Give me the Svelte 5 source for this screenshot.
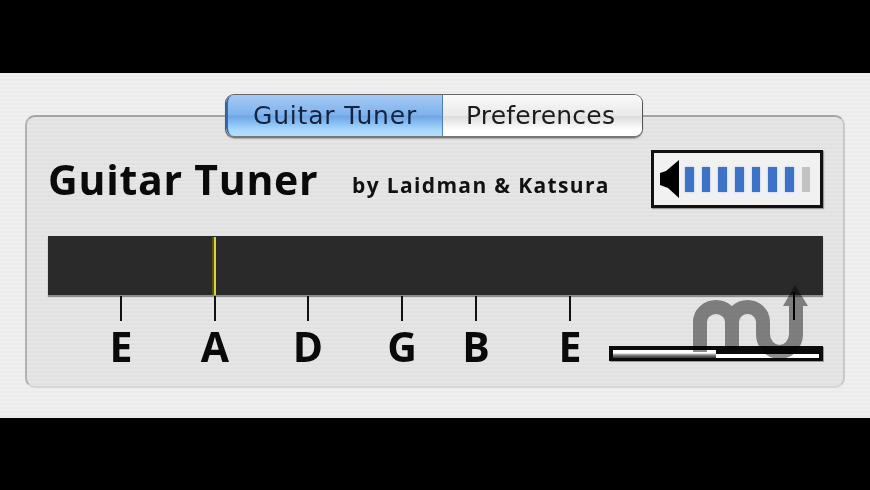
<script>
  const notes = [
    { n: 'E', x: 72 },
    { n: 'A', x: 166 },
    { n: 'D', x: 259 },
    { n: 'G', x: 353 },
    { n: 'B', x: 427 },
    { n: 'E', x: 521 }
  ];
  const levels = [1, 1, 1, 1, 1, 1, 1, 0];
</script>

<div class="window">
  <section class="panel">
    <div class="tabs">
      <div class="tab active">Guitar Tuner</div>
      <div class="tab">Preferences</div>
    </div>

    <header class="head">
      <h1>Guitar Tuner</h1>
      <p>by Laidman &amp; Katsura</p>
      <div class="meter">
        <svg class="speaker" width="20" height="38" viewBox="0 0 20 38">
          <polygon points="0,13 6,11 19,0 19,38 8,28 0,25" fill="#000" />
        </svg>
        {#each levels as on}
          <span class="seg" class:on></span>
        {/each}
      </div>
    </header>

    <div class="bar"><span class="needle"></span></div>

    <div class="scale">
      {#each notes as note}
        <div class="note" style="left:{note.x}px">
          <span class="tick"></span>
          <span class="letter">{note.n}</span>
        </div>
      {/each}
      <div class="progress"><span class="fill"></span></div>
    </div>
  </section>

  <svg class="logo" width="870" height="490" viewBox="0 0 870 490">
    <g class="mark">
      <path d="M700 352V322a16 15 0 0 1 32 0V350M732 322a15.500 15 0 0 1 31 0V334a16.500 18 0 0 0 33 0V303" fill="none" stroke="#8c8c8c" stroke-width="14" />
      <polygon points="783,306 808,306 795,285" fill="#8c8c8c" />
    </g>
    <path d="M794 292V320" stroke="#000" stroke-width="2" />
  </svg>
</div>

<style>
  :global(body) {
    margin: 0;
    background: #000;
  }
  .window {
    box-sizing: border-box;
    margin-top: 73px;
    width: 870px;
    height: 345px;
    padding: 42px 25px 30px 25px;
    position: relative;
    overflow: hidden;
    background: repeating-linear-gradient(180deg, #f0f0f0 0 2px, #ebebeb 2px 4px);
    font-family: "DejaVu Sans", sans-serif;
    filter: blur(0.45px);
  }
  .panel {
    box-sizing: border-box;
    position: relative;
    height: 273px;
    padding: 34px 20px 0 21px;
    border: 1px solid #aaa;
    border-top: 2px solid #a4a4a4;
    border-left: 2px solid #b2b2b2;
    border-right: 2px solid #c8c8c8;
    border-bottom: 2px solid #d6d6d6;
    border-radius: 10px;
    background: repeating-linear-gradient(180deg, #e6e6e6 0 2px, #e1e1e1 2px 4px);
  }
  .tabs {
    position: absolute;
    top: -23px;
    left: 198px;
    display: flex;
    width: 418px;
    height: 44px;
    box-sizing: border-box;
    border: 1px solid #555;
    border-top-color: #666;
    border-bottom: 2px solid #777;
    border-radius: 9px;
    overflow: hidden;
    box-shadow: 0 1px 1px rgba(0, 0, 0, 0.25);
  }
  .tab {
    flex: 1;
    display: flex;
    align-items: center;
    justify-content: center;
    padding-right: 4px;
    font-size: 25px;
    letter-spacing: 0.2px;
    color: #1c1c1c;
    background: linear-gradient(180deg, #fafafa 0, #e9e9e9 50%, #dcdcdc 52%, #fff 85%);
  }
  .tab.active {
    flex: 0 0 214px;
    padding-right: 0;
    letter-spacing: 0.8px;
    color: #14233f;
    background: linear-gradient(180deg, #a4c9f5 0, #7fb3ec 48%, #6ea5e6 52%, #a6d8fd 85%, #b4e0ff 100%);
    border-right: 1px solid #4d7fbd;
    border-left: 2px solid #3a67a8;
    border-radius: 8px 0 0 8px;
  }
  .head {
    display: flex;
    align-items: flex-start;
    height: 85px;
  }
  h1 {
    margin: 5px 0 0;
    font-family: "Open Sans", sans-serif;
    font-size: 41px;
    line-height: 46px;
    font-weight: 700;
    color: #0a0a0a;
    letter-spacing: 0.75px;
    width: 304px;
    white-space: nowrap;
  }
  .head p {
    margin: 20px 0 0;
    font-family: "Open Sans", sans-serif;
    font-size: 21px;
    line-height: 28px;
    font-weight: 700;
    letter-spacing: 1.35px;
    color: #111;
    white-space: nowrap;
    flex: 1;
  }
  .meter {
    box-sizing: border-box;
    display: flex;
    align-items: center;
    gap: 8.17px;
    flex: none;
    width: 172px;
    height: 58px;
    margin-top: -1px;
    padding-left: 6px;
    background: #f1f1f1;
    border: 3px solid #111;
    box-shadow: 1px 1px 1px #999;
  }
  .speaker {
    margin-right: -3px;
  }
  .seg {
    width: 8.5px;
    height: 25px;
    background: #c2c2c2;
  }
  .seg.on {
    background: #3d72c6;
    box-shadow: 0 0 2px #9cc3ee;
  }
  .bar {
    position: relative;
    height: 59px;
    background: #2a2a2a;
    box-shadow: 0 2px 1px #8d8d8d;
  }
  .needle {
    position: absolute;
    left: 166px;
    top: 1px;
    bottom: 0;
    width: 2px;
    background: #dcd23e;
    box-shadow: -2px 0 0 #55521c;
  }
  .scale {
    position: relative;
    height: 70px;
  }
  .note {
    position: absolute;
    top: 0;
    width: 2px;
    display: flex;
    flex-direction: column;
    align-items: center;
  }
  .tick {
    flex: none;
    width: 2px;
    height: 25px;
    margin-top: 1px;
    background: #111;
  }
  .letter {
    margin-top: 2px;
    font-family: "Open Sans", sans-serif;
    font-size: 41px;
    line-height: 46px;
    font-weight: 700;
    color: #0a0a0a;
  }
  .progress {
    box-sizing: border-box;
    position: absolute;
    top: 51px;
    right: 0;
    width: 214px;
    height: 15px;
    border: 4px solid #0a0a0a;
    border-bottom-width: 3px;
    background: linear-gradient(180deg, #0a0a0a 0 4px, #fff 4px);
    box-shadow: 1px 1px 0 #999;
  }
  .fill {
    display: block;
    width: 103px;
    height: 100%;
    background: linear-gradient(180deg, #fff 0 3px, #888 5px, #333 100%);
  }
  .logo {
    position: absolute;
    left: 0;
    top: -73px;
    pointer-events: none;
  }
  .mark {
    mix-blend-mode: multiply;
  }
</style>
